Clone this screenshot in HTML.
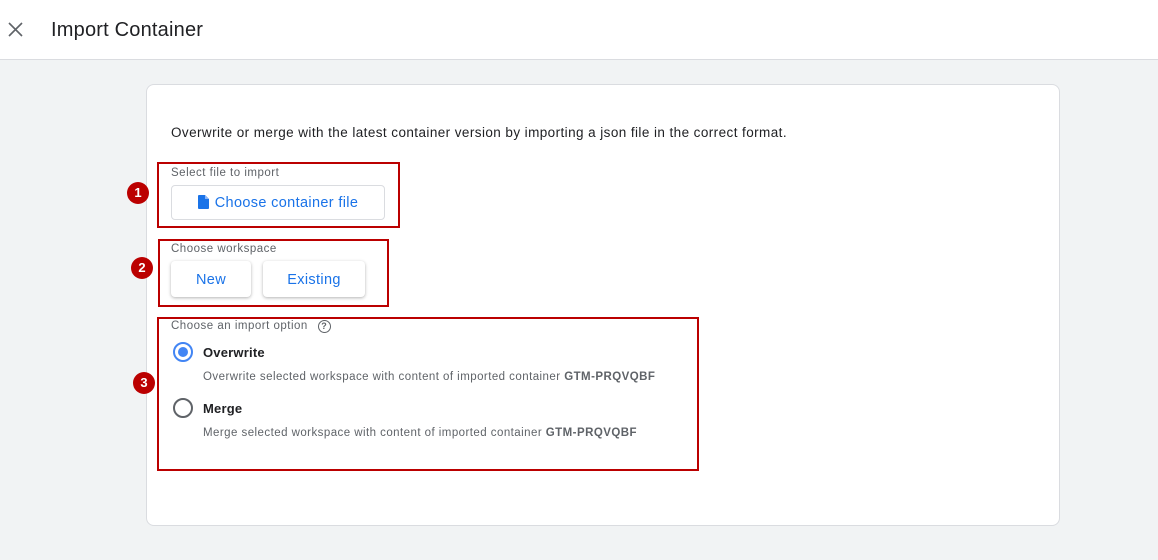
<!DOCTYPE html>
<html><head><style>
*{box-sizing:border-box;margin:0;padding:0}
body{width:1158px;height:560px;background:#f1f3f4;font-family:"Liberation Sans",sans-serif;position:relative;overflow:hidden;color:#202124}
.top{position:absolute;left:0;top:0;width:1158px;height:60px;background:#fff;border-bottom:1px solid #dadce0}
.title{position:absolute;left:51px;top:19px;font-size:20px;color:#202124;letter-spacing:0.2px}
.card{position:absolute;left:146px;top:84px;width:914px;height:442px;background:#fff;border:1px solid #dadce0;border-radius:8px}
.a{position:absolute}
.lbl{font-size:11.5px;color:#5f6368;letter-spacing:0.5px}
.rb{position:absolute;border:2px solid #b00;}
.badge{position:absolute;width:22px;height:22px;border-radius:50%;background:#b00;color:#fff;font-weight:bold;font-size:13px;text-align:center;line-height:22px}
.btn{position:absolute;background:#fff;color:#1a73e8;font-size:14.5px;text-align:center;border-radius:4px;letter-spacing:0.35px}
.sub{font-size:11.5px;color:#5f6368;letter-spacing:0.45px}
</style></head><body>
<div class="top">
<svg class="a" style="left:8px;top:22px" width="15" height="15" viewBox="0 0 15 15"><path d="M1 1L14 14M14 1L1 14" stroke="#5f6368" stroke-width="1.6"/></svg>
<div class="title">Import Container</div>
</div>
<div class="card"></div>
<div class="a" style="left:171px;top:125px;font-size:13.5px;letter-spacing:0.42px">Overwrite or merge with the latest container version by importing a json file in the correct format.</div>

<div class="rb" style="left:157px;top:162px;width:243px;height:66px"></div>
<div class="a lbl" style="left:171px;top:167px">Select file to import</div>
<div class="btn" style="left:171px;top:185px;width:214px;height:35px;border:1px solid #dadce0;line-height:35px"><svg style="vertical-align:-2px;margin-right:6px" width="11" height="14" viewBox="0 0 11 14"><path d="M1 0H7L11 4V13a1 1 0 0 1-1 1H1a1 1 0 0 1-1-1V1a1 1 0 0 1 1-1z" fill="#1a73e8"/><path d="M7 0V4H11" fill="#8ab4f8"/></svg>Choose container file</div>
<div class="badge" style="left:127px;top:182px">1</div>

<div class="rb" style="left:158px;top:239px;width:231px;height:68px"></div>
<div class="a lbl" style="left:171px;top:243px">Choose workspace</div>
<div class="btn" style="left:171px;top:261px;width:80px;height:36px;line-height:38px;box-shadow:0 1px 3px rgba(0,0,0,.3)">New</div>
<div class="btn" style="left:263px;top:261px;width:102px;height:36px;line-height:38px;box-shadow:0 1px 3px rgba(0,0,0,.3)">Existing</div>
<div class="badge" style="left:131px;top:257px">2</div>

<div class="rb" style="left:157px;top:317px;width:542px;height:154px"></div>
<div class="a lbl" style="left:171px;top:320px">Choose an import option <span style="display:inline-block;width:13px;height:13px;border:1.5px solid #5f6368;border-radius:50%;font-size:9px;text-align:center;line-height:10px;margin-left:6px;font-weight:bold;letter-spacing:0">?</span></div>
<div class="a" style="left:173px;top:342px;width:20px;height:20px;border:2px solid #4285f4;border-radius:50%"><div style="position:absolute;left:3px;top:3px;width:10px;height:10px;border-radius:50%;background:#4285f4"></div></div>
<div class="a" style="left:203px;top:345px;font-size:13px;font-weight:bold;letter-spacing:0.2px">Overwrite</div>
<div class="a sub" style="left:203px;top:371px">Overwrite selected workspace with content of imported container <b>GTM-PRQVQBF</b></div>
<div class="a" style="left:173px;top:398px;width:20px;height:20px;border:2px solid #5f6368;border-radius:50%"></div>
<div class="a" style="left:203px;top:401px;font-size:13px;font-weight:bold;letter-spacing:0.2px">Merge</div>
<div class="a sub" style="left:203px;top:427px">Merge selected workspace with content of imported container <b>GTM-PRQVQBF</b></div>
<div class="badge" style="left:133px;top:372px">3</div>
</body></html>
